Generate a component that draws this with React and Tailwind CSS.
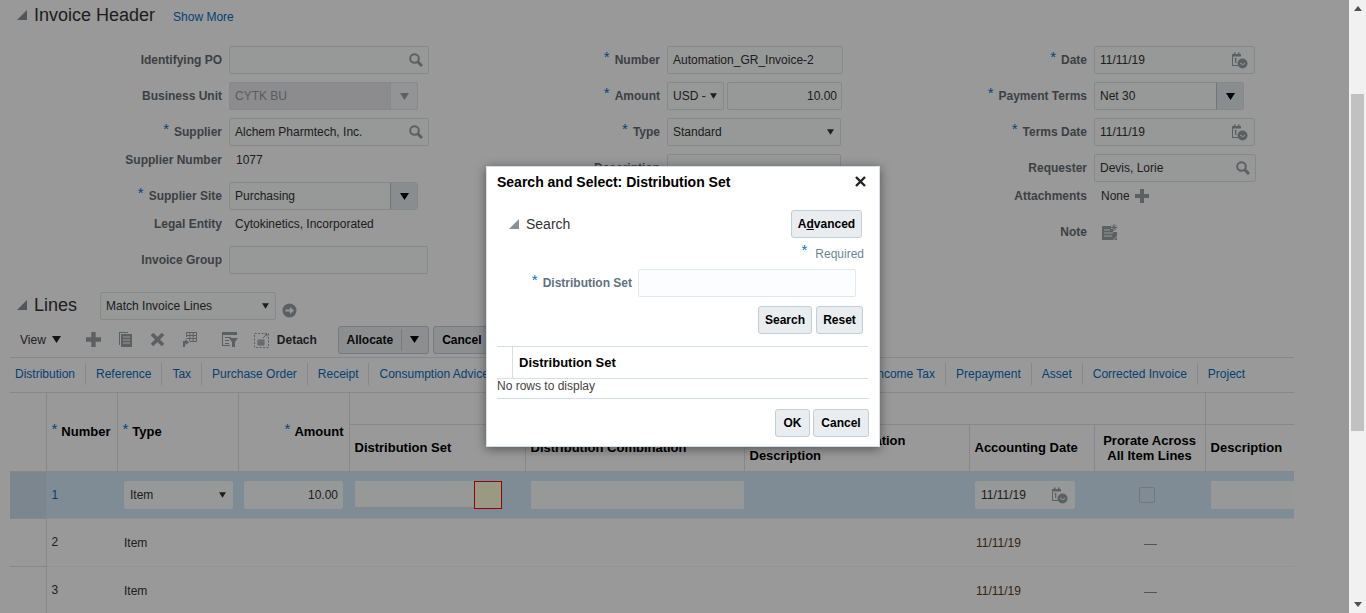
import React from "react";

const Tri = () => (
  <svg width="12" height="12" viewBox="0 0 12 12" className="shrink-0">
    <path d="M11 1V11H1Z" fill="#8a8f94" />
  </svg>
);
const Arrow = ({ c = "#000", w = 9, h = 7 }) => (
  <svg width={w} height={h} viewBox="0 0 9 7" className="shrink-0">
    <path d="M0 0H9L4.5 7Z" fill={c} />
  </svg>
);
const SearchIcon = () => (
  <svg width="14" height="14" viewBox="0 0 14 14" className="shrink-0 ml-auto">
    <circle cx="5.5" cy="5.5" r="4.3" fill="none" stroke="#98a0a6" strokeWidth="2" />
    <path d="M8.8 8.8L13 13" stroke="#98a0a6" strokeWidth="3" />
  </svg>
);
const CalIcon = () => (
  <svg width="17" height="17" viewBox="0 0 17 17" className="shrink-0 ml-auto mr-[1px]">
    <path d="M1 3H10V4.5H2V13H7V14H1Z" fill="#98a0a6" />
    <path d="M1 2H10V4H1Z M3 0.5H4.5V3H3Z M7 0.5H8.5V3H7Z" fill="#98a0a6" />
    <path d="M4 6H5.3V11H4Z M3.2 7L4 6V7.3Z" fill="#98a0a6" />
    <circle cx="11.5" cy="11.5" r="5" fill="#98a0a6" />
    <path d="M9 11L11.5 12.5L14 11.5" fill="none" stroke="#fff" strokeWidth="1" />
  </svg>
);
const Req = ({ className = "" }) => (
  <span className={`font-normal text-[15px] leading-[0] text-[#0572ce] align-[2px] mr-[5px] ${className}`}>*</span>
);
const Label = ({ w, req, children }) => (
  <div className="shrink-0 text-right font-bold text-[#666c70] whitespace-nowrap" style={{ width: w }}>
    {req && <Req />}
    {children}
  </div>
);
const Input = ({ w, value, icon, className = "" }) => (
  <div
    className={`h-[28px] flex items-center px-[5px] border border-[#dfe4e7] bg-[#fcfdfd] rounded-[2px] text-[#333] ${className}`}
    style={{ width: w }}
  >
    {value && <span className="whitespace-nowrap">{value}</span>}
    {icon}
  </div>
);
const Combo = ({ w, value, disabled }) => (
  <div
    className={`h-[28px] flex items-stretch border rounded-[2px] ${disabled ? "border-[#e3e5e8] bg-[#eaeaee] text-[#94989c]" : "border-[#dfe4e7] bg-[#fcfdfd] text-[#333]"}`}
    style={{ width: w }}
  >
    <span className="flex-1 flex items-center px-[5px]">{value}</span>
    <span
      className={`w-[27px] flex items-center justify-center border-l rounded-r-[2px] ${disabled ? "border-[#e3e5e8] bg-[#f6f7f8]" : "border-[#b9c2c9] bg-[#e6ecf1]"}`}
    >
      <Arrow c={disabled ? "#9aa0a5" : "#000"} />
    </span>
  </div>
);
const NativeSelect = ({ w, value, className = "" }) => (
  <div
    className={`h-[28px] flex items-center justify-between pl-[5px] pr-[6px] border border-[#dfe4e7] bg-[#fcfdfd] rounded-[2px] text-[#333] ${className}`}
    style={{ width: w }}
  >
    <span className="whitespace-nowrap">{value}</span>
    <Arrow c="#333" w={7} h={6} />
  </div>
);
const Row = ({ lw, label, req, children, h = "h-[36px]", mt = "" }) => (
  <div className={`flex items-center gap-[7px] ${h} ${mt}`}>
    <Label w={lw} req={req}>{label}</Label>
    {children}
  </div>
);
const Btn = ({ w, children, className = "" }) => (
  <div
    className={`h-[28px] flex items-center justify-center rounded-[3px] border border-[#c4ced7] bg-[#e9edf0] font-bold text-[#000] shrink-0 ${className}`}
    style={{ width: w }}
  >
    {children}
  </div>
);
const Tab = ({ children, first }) => (
  <div className={`h-[22px] flex items-center whitespace-nowrap text-[#0a6cc0] px-[10px] ${first ? "" : "border-l border-[#dfe4e7]"}`}>
    {children}
  </div>
);

const thBase = "border border-[#dfe4e8] font-bold text-[13px] text-[#000] pl-[5px] pr-[5px] pb-[2px] leading-[15px] text-left";
const reqTh = "!mr-[4px]";

export default function App() {
  const lw1 = 222, lw2 = 220, lw3 = 227;
  return (
    <div className="relative w-[1366px] h-[613px] overflow-hidden flex bg-white text-[12px] leading-[14px] text-[#333] font-['Liberation_Sans',Arial,sans-serif]">
      <div className="w-[1349px] h-[613px] shrink-0 overflow-hidden flex flex-col">
        {/* Invoice header */}
        <div className="h-[30px] flex items-center pl-[16px] shrink-0">
          <Tri />
          <span className="ml-[6px] text-[18px] leading-[22px] text-[#333]">Invoice Header</span>
          <span className="ml-[18px] mt-[3px] text-[#0a6cc0]">Show More</span>
        </div>

        <div className="mt-[12px] flex h-[236px] shrink-0">
          <div className="w-[440px] shrink-0">
            <Row lw={lw1} label="Identifying PO"><Input w={200} icon={<SearchIcon />} /></Row>
            <Row lw={lw1} label="Business Unit"><Combo w={189} value="CYTK BU" disabled /></Row>
            <Row lw={lw1} label="Supplier" req><Input w={200} value="Alchem Pharmtech, Inc." icon={<SearchIcon />} /></Row>
            <Row lw={lw1} label="Supplier Number" h="h-[20px]"><span className="ml-[7px]">1077</span></Row>
            <Row lw={lw1} label="Supplier Site" req mt="mt-[8px]"><Combo w={189} value="Purchasing" /></Row>
            <Row lw={lw1} label="Legal Entity" h="h-[20px]"><span className="ml-[6px]">Cytokinetics, Incorporated</span></Row>
            <Row lw={lw1} label="Invoice Group" mt="mt-[8px]"><Input w={199} /></Row>
          </div>
          <div className="w-[420px] shrink-0">
            <Row lw={lw2} label="Number" req><Input w={176} value="Automation_GR_Invoice-2" /></Row>
            <Row lw={lw2} label="Amount" req>
              <div className="flex gap-[3px]">
                <NativeSelect w={57} value="USD -" />
                <Input w={115} value="10.00" className="justify-end !pr-[4px]" />
              </div>
            </Row>
            <Row lw={lw2} label="Type" req><NativeSelect w={174} value="Standard" /></Row>
            <Row lw={lw2} label="Description"><Input w={174} /></Row>
          </div>
          <div className="flex-1">
            <Row lw={lw3} label="Date" req><Input w={161} value="11/11/19" icon={<CalIcon />} /></Row>
            <Row lw={lw3} label="Payment Terms" req><Combo w={150} value="Net 30" /></Row>
            <Row lw={lw3} label="Terms Date" req><Input w={161} value="11/11/19" icon={<CalIcon />} /></Row>
            <Row lw={lw3} label="Requester"><Input w={162} value="Devis, Lorie" icon={<SearchIcon />} /></Row>
            <Row lw={lw3} label="Attachments" h="h-[20px]">
              <span className="ml-[7px]">None</span>
              <svg width="14" height="14" viewBox="0 0 14 14" className="-ml-[2px]">
                <path d="M5 0H9V5H14V9H9V14H5V9H0V5H5Z" fill="#98a0a6" />
              </svg>
            </Row>
            <Row lw={lw3} label="Note" h="h-[20px]" mt="mt-[16px]">
              <svg width="16" height="16" viewBox="0 0 16 16" className="ml-[8px]">
                <path d="M0 2H9V5H11V8H15V12L11 16H0Z" fill="#98a0a6" />
                <path d="M2 6H8M2 9H11M2 12H10" stroke="#fff" strokeWidth="1" />
                <path d="M12 0V7M8.7 3.5H15.3M9.7 1.2L14.3 5.8M14.3 1.2L9.7 5.8" stroke="#98a0a6" strokeWidth="1" />
                <path d="M15 13V16H12Z" fill="#98a0a6" />
              </svg>
            </Row>
          </div>
        </div>

        {/* Lines header */}
        <div className="mt-[14px] h-[28px] flex items-start pl-[16px] shrink-0">
          <div className="mt-[7px]"><Tri /></div>
          <span className="ml-[6px] mt-[2px] text-[18px] leading-[22px] text-[#333]">Lines</span>
          <NativeSelect w={176} value="Match Invoice Lines" className="ml-[23px]" />
          <svg width="15" height="15" viewBox="0 0 15 15" className="ml-[6px] mt-[11px]">
            <circle cx="7.5" cy="7.5" r="7" fill="#98a0a6" />
            <path d="M3.5 6.5H8V4L12 7.5L8 11V8.5H3.5Z" fill="#fff" />
          </svg>
        </div>

        {/* Toolbar */}
        <div className="mt-[5px] h-[29px] flex items-center pl-[20px] shrink-0">
          <span className="text-[#333]">View</span>
          <span className="ml-[6px]"><Arrow c="#222" /></span>
          <svg width="15" height="15" viewBox="0 0 14 14" className="ml-[25px]">
            <path d="M5 0H9V5H14V9H9V14H5V9H0V5H5Z" fill="#98a0a6" />
          </svg>
          <svg width="15" height="15" viewBox="0 0 15 15" className="ml-[17px]">
            <path d="M1 0H10V1H2V13H1Z M3 2H14V15H3Z" fill="#98a0a6" />
            <path d="M5 5H12M5 8H12M5 11H12" stroke="#fff" strokeWidth="1" />
          </svg>
          <svg width="15" height="15" viewBox="0 0 15 15" className="ml-[17px]">
            <path d="M2 2L13 13M13 2L2 13" stroke="#98a0a6" strokeWidth="3.6" />
          </svg>
          <svg width="15" height="15" viewBox="0 0 15 15" className="ml-[17px]">
            <path d="M4.5 0.5H14.5V9.5H8M4.5 0.5V5M4.5 3.5H14.5M4.5 6.5H14.5M7.8 0.5V9.5M11.2 0.5V9.5" fill="none" stroke="#98a0a6" strokeWidth="1" />
            <path d="M1 15V9H3.5V7L7 10.5L3.5 13V11H3V15Z" fill="#98a0a6" />
          </svg>
          <svg width="16" height="15" viewBox="0 0 16 15" className="ml-[25px]">
            <path d="M0 0H15V3H0Z" fill="#98a0a6" />
            <path d="M0 3H1V13H8V14H0Z M3 5H9V6H3Z M3 8H7V9H3Z M3 11H7V12H3Z" fill="#98a0a6" />
            <path d="M7 6H16L13 10V15H10V10Z" fill="#98a0a6" />
          </svg>
          <svg width="16" height="16" viewBox="0 0 16 16" className="ml-[16px]">
            <rect x="0.5" y="1.5" width="14" height="14" fill="none" stroke="#98a0a6" strokeDasharray="2 1.5" />
            <path d="M4 8H10V13H4Z M4 10H10M4 11.8H10M6 8V13M8 8V13" fill="none" stroke="#98a0a6" strokeWidth="1" />
            <path d="M9 6L13 2M10.5 2H13V4.5" fill="none" stroke="#98a0a6" strokeWidth="1" />
          </svg>
          <span className="ml-[7px] font-bold text-[#333]">Detach</span>
          <div className="ml-[21px] w-[91px] h-[28px] flex items-center rounded-[3px] border border-[#c4ced7] bg-[#e9edf0] font-bold text-[#111]">
            <span className="w-[63px] h-[22px] flex items-center justify-center border-r border-[#c4ced7]">Allocate</span>
            <span className="flex-1 flex items-center justify-center"><Arrow /></span>
          </div>
          <Btn w={58} className="ml-[4px]">Cancel</Btn>
        </div>

        {/* Tabs */}
        <div className="mt-[3px] ml-[10px] w-[1284px] h-[36px] flex items-center pb-[2px] border-y border-[#dfe4e8] shrink-0 -mb-[1px]">
          <div className="-ml-[5px] flex items-center">
            <Tab first>Distribution</Tab>
            <Tab>Reference</Tab>
            <Tab>Tax</Tab>
            <Tab>Purchase Order</Tab>
            <Tab>Receipt</Tab>
            <Tab>Consumption Advice</Tab>
            <div className="w-[365px] shrink-0" />
            <Tab first>Income Tax</Tab>
            <Tab>Prepayment</Tab>
            <Tab>Asset</Tab>
            <Tab>Corrected Invoice</Tab>
            <Tab>Project</Tab>
          </div>
        </div>

        {/* Table */}
        <div className="ml-[10px] w-[1284px] overflow-hidden shrink-0">
          <table className="table-fixed border-collapse w-[1284px]">
            <colgroup>
              <col className="w-[36px]" />
              <col className="w-[71px]" />
              <col className="w-[121px]" />
              <col className="w-[111px]" />
              <col className="w-[176px]" />
              <col className="w-[219px]" />
              <col className="w-[225px]" />
              <col className="w-[125px]" />
              <col className="w-[111px]" />
              <col className="w-[89px]" />
            </colgroup>
            <thead>
              <tr className="h-[32px]">
                <th rowSpan={2} className="border-y border-r border-[#dfe4e8]" />
                <th rowSpan={2} className={thBase}><Req className={reqTh} />Number</th>
                <th rowSpan={2} className={thBase}><Req className={reqTh} />Type</th>
                <th rowSpan={2} className={`${thBase} !text-right`}><Req className={reqTh} />Amount</th>
                <th colSpan={5} className={thBase} />
                <th className={`${thBase} border-r-0`} />
              </tr>
              <tr className="h-[47px]">
                <th className={thBase}>Distribution Set</th>
                <th className={thBase}>Distribution Combination</th>
                <th className={`${thBase} !pb-0`}>Distribution Combination Description</th>
                <th className={thBase}>Accounting Date</th>
                <th className={`${thBase} !text-center !pb-0`}>Prorate Across<br />All Item Lines</th>
                <th className={`${thBase} border-r-0 whitespace-nowrap`}>Description</th>
              </tr>
            </thead>
            <tbody>
              <tr className="h-[47px] bg-[#d4e8f8]">
                <td className="bg-[#cfdfee] border-r border-[#dfe4e8]" />
                <td className="px-[5px] text-[#0a6cc0]">1</td>
                <td className="pl-[7px]"><NativeSelect w={109} value="Item" className="border-transparent" /></td>
                <td className="pl-[6px]"><Input w={99} value="10.00" className="justify-end !pr-[4px] border-transparent" /></td>
                <td className="pl-[6px]">
                  <div className="w-[147px] h-[28px] flex">
                    <div className="w-[119px] h-[28px] bg-[#fcfdfd] border-b-2 border-[#dfe4e7]" />
                    <div className="w-[28px] h-[28px] bg-[#ffffdc] border border-[#ff0000]" />
                  </div>
                </td>
                <td className="pl-[6px]"><div className="w-[213px] h-[28px] bg-[#fcfdfd]" /></td>
                <td />
                <td className="px-[6px]"><Input w={100} value="11/11/19" icon={<CalIcon />} className="border-transparent" /></td>
                <td className="pl-[45px]">
                  <div className="w-[16px] h-[16px] bg-[#d6e8f6] border border-[#bcc8d2] rounded-[2px]" />
                </td>
                <td className="pl-[6px]"><div className="w-[90px] h-[28px] bg-[#fcfdfd]" /></td>
              </tr>
              {["2", "3"].map((n) => (
                <tr key={n} className="h-[48px] border-t border-[#f2f3f4]">
                  <td className="border-r border-t border-[#dfe4e8]" />
                  <td className="px-[5px] pb-[2px]">{n}</td>
                  <td className="pl-[7px]">Item</td>
                  <td /><td /><td /><td />
                  <td className="pl-[7px] text-[#5a3e1a]">11/11/19</td>
                  <td>
                    <div className="ml-[50px] mt-[3px] w-[13px] h-px bg-[#8a8a8a]" />
                  </td>
                  <td />
                </tr>
              ))}
            </tbody>
          </table>
        </div>
      </div>

      {/* Scrollbar */}
      <div className="w-[17px] h-[613px] shrink-0 bg-[#f1f1f1] flex flex-col items-center">
        <div className="h-[17px] flex items-center justify-center">
          <svg width="8" height="5" viewBox="0 0 8 5"><path d="M0 5H8L4 0Z" fill="#505050" /></svg>
        </div>
        <div className="mt-[77px] w-[13px] h-[337px] bg-[#c1c1c1]" />
        <div className="mt-auto h-[17px] flex items-center justify-center">
          <svg width="8" height="5" viewBox="0 0 8 5"><path d="M0 0H8L4 5Z" fill="#505050" /></svg>
        </div>
      </div>

      {/* Modal mask */}
      <div className="absolute left-0 top-0 w-[1349px] h-[613px] bg-black/40" />

      {/* Dialog */}
      <div className="absolute left-[486px] top-[166px] w-[394px] h-[281px] bg-white border border-[#d6dfe6] shadow-[0_2px_10px_rgba(0,0,0,0.45)] flex flex-col pl-[10px] pr-[10px]">
        <div className="h-[29px] flex items-center justify-between shrink-0">
          <span className="font-bold text-[14px] leading-[16px] text-[#000] whitespace-nowrap">Search and Select: Distribution Set</span>
          <svg width="11" height="11" viewBox="0 0 11 11" className="mr-[3px]">
            <path d="M1 1L10 10M10 1L1 10" stroke="#222" strokeWidth="2.4" />
          </svg>
        </div>
        <div className="mt-[14px] h-[28px] flex items-center shrink-0 pl-[11px] pr-[7px]">
          <Tri />
          <span className="ml-[6px] text-[14px] leading-[16px] text-[#333]">Search</span>
          <Btn w={71} className="ml-auto">
            <span>A<span className="underline">d</span>vanced</span>
          </Btn>
        </div>
        <div className="mt-[6px] h-[20px] flex items-center justify-end shrink-0 pr-[5px] text-[#6f8491]">
          <span className="text-[15px] leading-[12px] text-[#0572ce] mr-[8px] mb-[8px]">*</span>
          Required
        </div>
        <div className="mt-[5px] flex items-center shrink-0 h-[28px]">
          <div className="w-[135px] text-right font-bold text-[#5f7280] whitespace-nowrap">
            <Req />Distribution Set
          </div>
          <div className="ml-[6px] w-[218px] h-[28px] border border-[#e3e8ec] bg-[#fcfdfe] rounded-[2px]" />
        </div>
        <div className="mt-[9px] flex justify-end gap-[4px] pr-[6px] shrink-0">
          <Btn w={54}>Search</Btn>
          <Btn w={47}>Reset</Btn>
        </div>
        <div className="mt-[12px] h-[33px] border-t border-b border-[#d6dfe6] flex shrink-0 mr-[1px]">
          <div className="w-[16px] border-r border-[#d6dfe6]" />
          <div className="pl-[6px] flex items-center font-bold text-[13px] text-[#000]">Distribution Set</div>
        </div>
        <div className="h-[20px] flex items-start text-[#444] border-b border-[#d6dfe6] shrink-0">No rows to display</div>
        <div className="mt-[10px] flex justify-end gap-[3px] shrink-0">
          <Btn w={35}>OK</Btn>
          <Btn w={56}>Cancel</Btn>
        </div>
      </div>
    </div>
  );
}
